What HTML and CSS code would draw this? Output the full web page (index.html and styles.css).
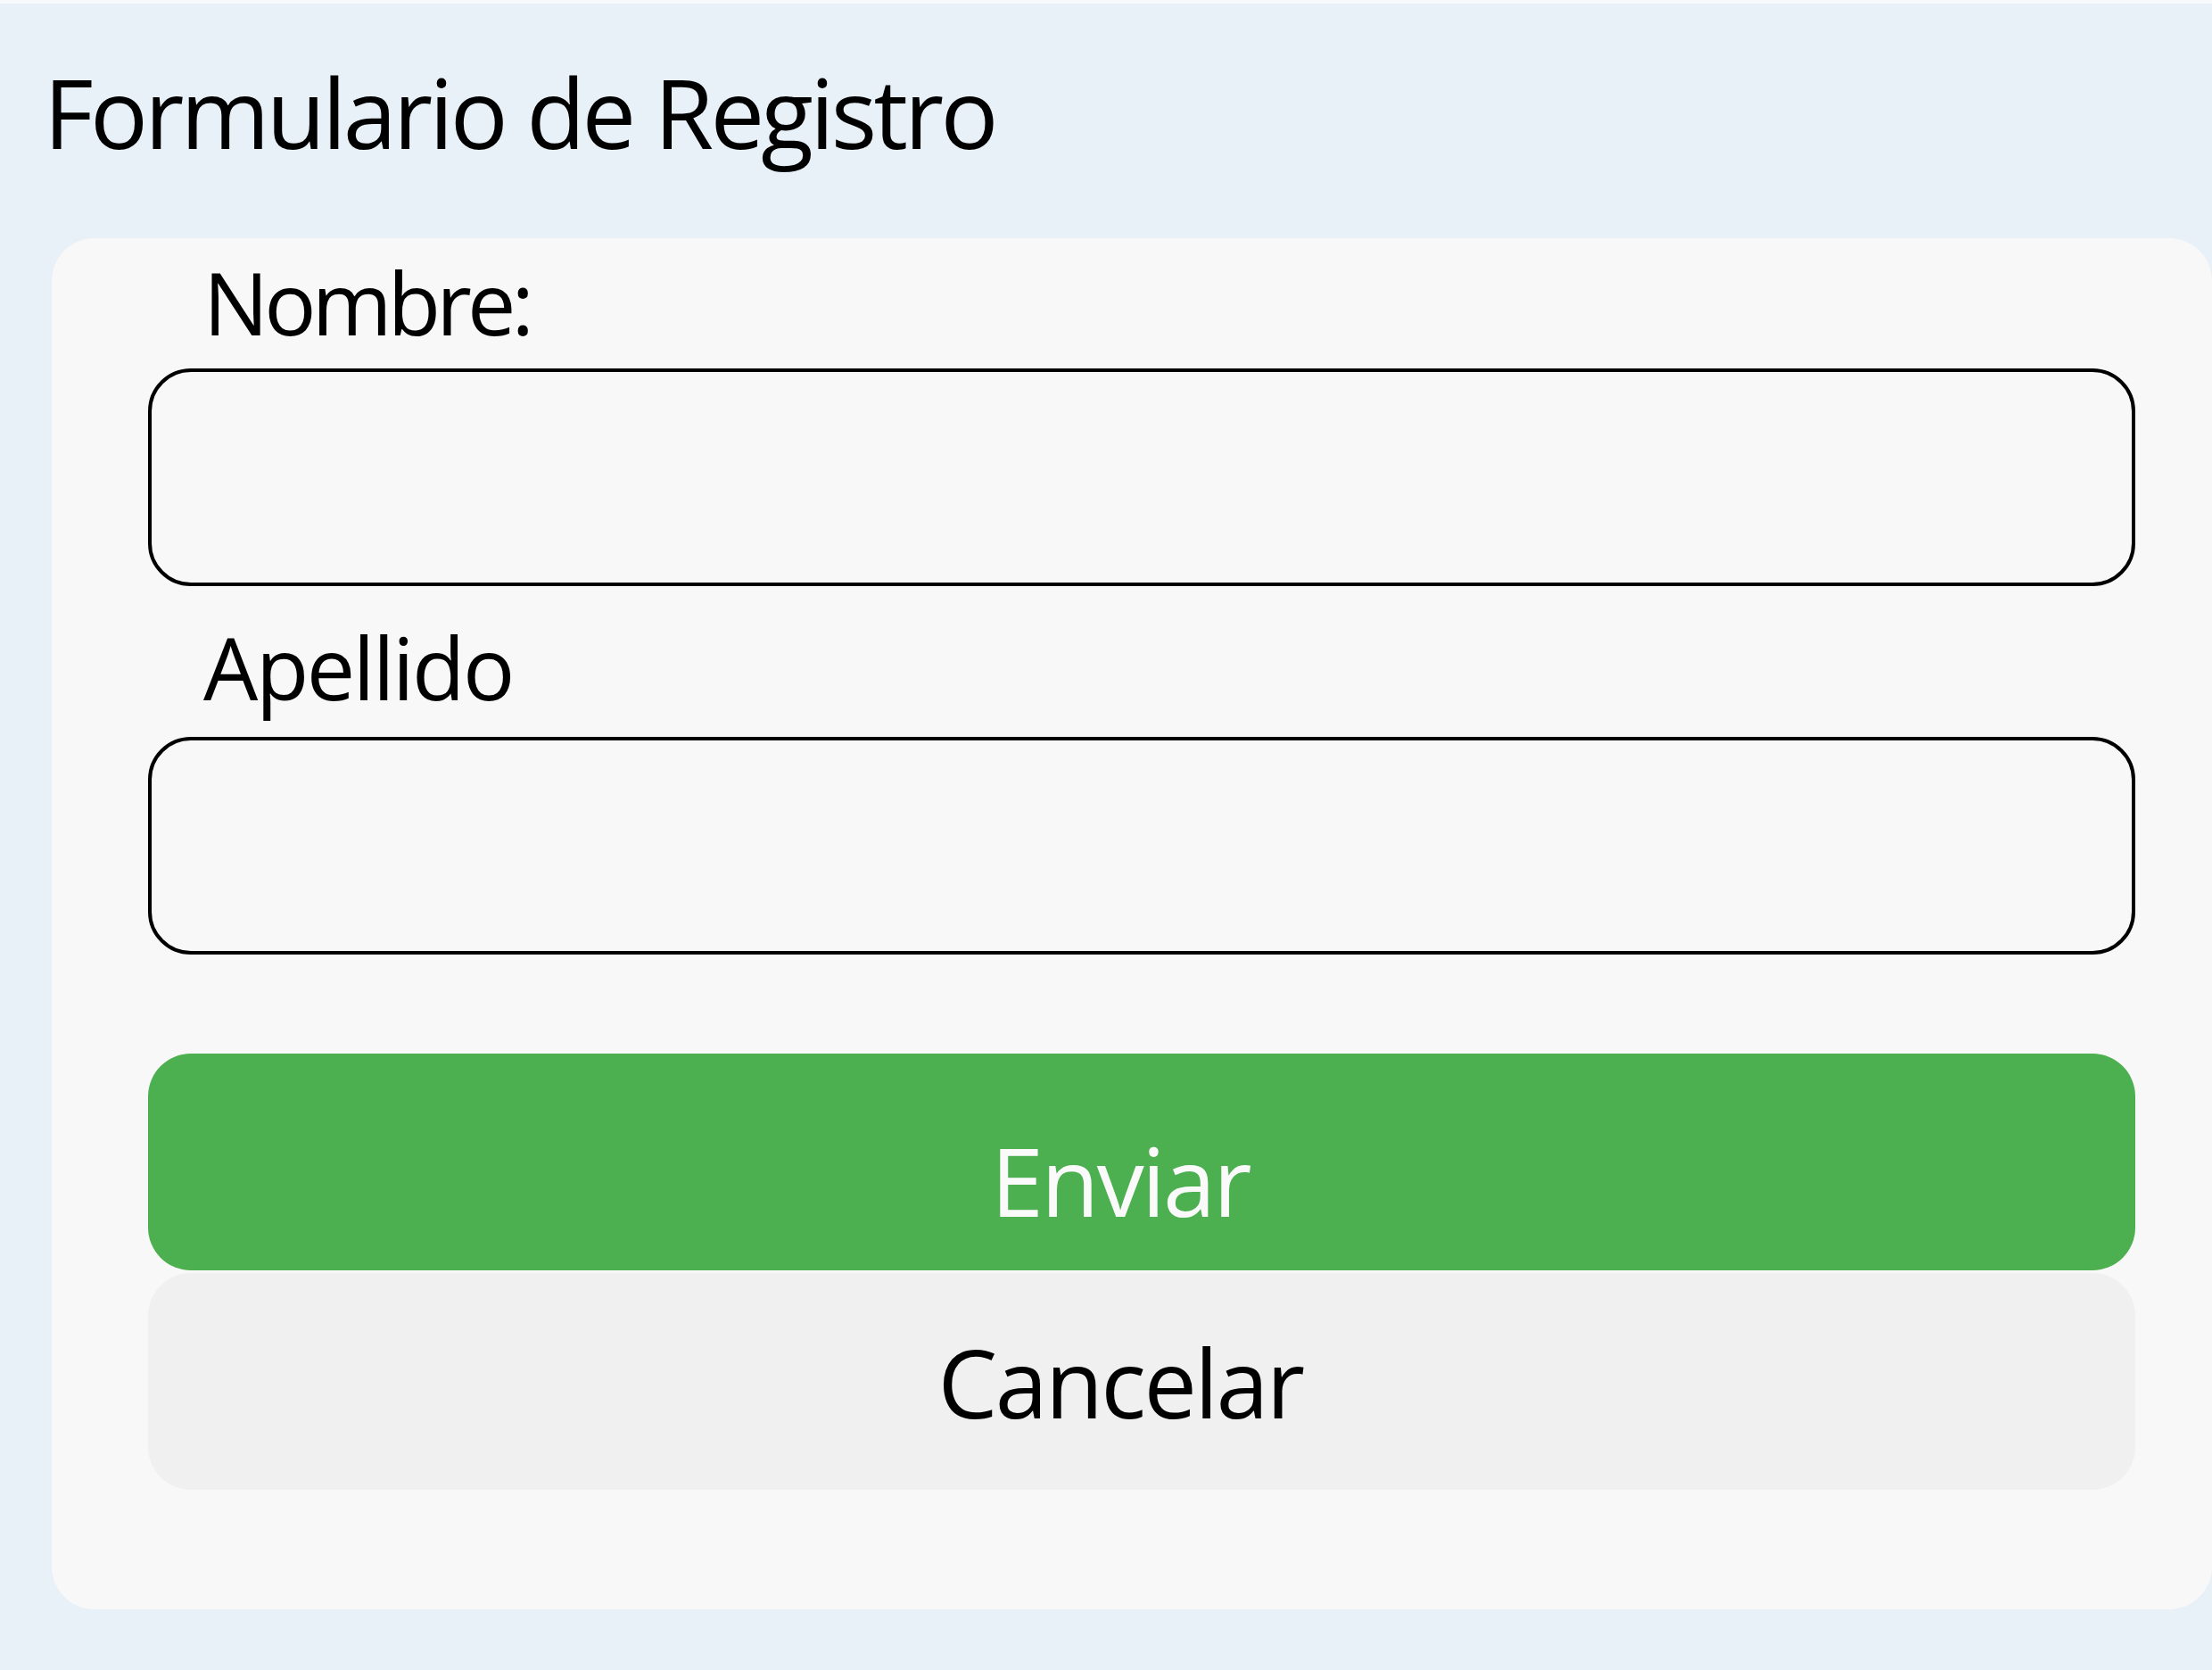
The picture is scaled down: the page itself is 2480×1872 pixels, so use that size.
FILE: index.html
```html
<!DOCTYPE html>
<html lang="es">
<head>
<meta charset="utf-8">
<title>Formulario de Registro</title>
<link rel="stylesheet" href="styles.css">
</head>
<body>
<main class="page">
  <h1 class="title">Formulario de Registro</h1>
  <form class="card">
    <label class="field-label field-label--first" for="nombre">Nombre:</label>
    <input class="field-input" id="nombre" type="text">
    <label class="field-label field-label--second" for="apellido">Apellido</label>
    <input class="field-input" id="apellido" type="text">
    <div class="actions">
      <button type="button" class="btn btn-primary">Enviar</button>
      <button type="button" class="btn btn-secondary">Cancelar</button>
    </div>
  </form>
</main>
</body>
</html>
```

FILE: styles.css
```css
html, body {
  margin: 0;
  padding: 0;
}
body {
  background: #e8f0f8;
  border-top: 4px solid #f7f9fc;
  font-family: "Open Sans", "Noto Sans", sans-serif;
  color: #000;
  height: 1868px;
  overflow: hidden;
}
.page {
  display: flex;
  flex-direction: column;
}
.title {
  margin: 68px 0 0 49px;
  font-size: 108px;
  line-height: 108px;
  font-weight: 400;
  height: 108px;
  letter-spacing: -0.035em;
}
.card {
  margin: 87px 0 0 58px;
  width: 2422px;
  box-sizing: border-box;
  background: #f9f8f9;
  border-radius: 48px;
  padding: 23px 86px 134px 108px;
  display: flex;
  flex-direction: column;
}
.field-label {
  display: block;
  font-size: 97px;
  line-height: 97px;
  height: 97px;
  padding-left: 62px;
  margin-bottom: 26px;
  letter-spacing: -0.035em;
}
.field-label--first {
  letter-spacing: -0.05em;
}
.field-label--second {
  margin-top: 42px;
  margin-bottom: 30px;
  letter-spacing: -0.025em;
}
.field-input {
  display: block;
  width: 100%;
  box-sizing: border-box;
  height: 244px;
  border: 4px solid #000;
  border-radius: 48px;
  background: #f9f8f9;
  margin: 0;
  outline: none;
}
.actions {
  margin-top: 111px;
  display: flex;
  flex-direction: column;
  gap: 3px;
}
.btn {
  display: flex;
  align-items: center;
  justify-content: center;
  height: 243px;
  box-sizing: border-box;
  border: none;
  border-radius: 48px;
  font-family: "Open Sans", "Noto Sans", sans-serif;
  font-size: 106px;
  line-height: 106px;
  letter-spacing: -0.025em;
  padding: 0 48px 0 0;
  margin: 0;
}
.btn-primary {
  background: #4caf50;
  color: #fafafa;
  padding-top: 40px;
}
.btn-secondary {
  background: #f0f0f0;
  color: #000;
}
```
